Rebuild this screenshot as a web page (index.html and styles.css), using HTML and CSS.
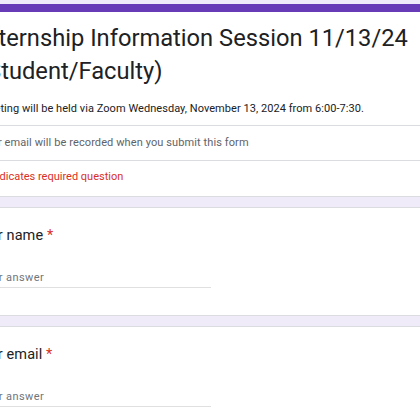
FILE: index.html
```html
<!DOCTYPE html>
<html>
<head>
<meta charset="utf-8">
<link rel="stylesheet" href="styles.css">
</head>
<body>
<div class="page">
  <div class="card header">
    <div class="head-main">
      <div class="title">Internship Information Session 11/13/24 (Student/Faculty)</div>
      <div class="desc">Meeting will be held via Zoom Wednesday, November 13, 2024 from 6:00-7:30.</div>
    </div>
    <div class="row note">Your email will be recorded when you submit this form</div>
    <div class="row required">* Indicates required question</div>
  </div>
  <div class="card question">
    <div class="q-label">Your name <span class="star">*</span></div>
    <div class="answer">Your answer</div>
  </div>
  <div class="card question">
    <div class="q-label">Your email <span class="star">*</span></div>
    <div class="answer">Your answer</div>
  </div>
</div>
</body>
</html>
```

FILE: styles.css
```css
html, body {
  margin: 0;
  padding: 0;
  background: #f0ebf8;
  overflow: hidden;
}
body {
  font-family: Roboto, "Liberation Sans", Arial, sans-serif;
  color: #202124;
}
.page {
  margin-left: -44px;
  width: 500px;
  padding-top: 4px;
  display: flex;
  flex-direction: column;
  gap: 10px;
}
.card {
  background: #fff;
  border: 1px solid #dadce0;
  border-radius: 8px;
}
.header {
  border-top: 8px solid #673ab7;
  border-radius: 8px 8px 0 0;
}
.head-main {
  padding: 10px 24px 7px 22px;
  border-bottom: 1px solid #dadce0;
}
.title {
  max-width: 436px;
  font-size: 23.7px;
  line-height: 33px;
  font-weight: 400;
  color: #202124;
}
.desc {
  margin-top: 12px;
  font-size: 11px;
  line-height: 18px;
  letter-spacing: 0.05px;
  color: #202124;
}
.row {
  padding: 8px 24px 8px 22px;
  font-size: 11px;
  line-height: 18px;
}
.note {
  color: #5f6368;
  letter-spacing: 0.1px;
  border-bottom: 1px solid #dadce0;
}
.required {
  color: #d93025;
  padding-left: 26px;
  padding-top: 7px;
  padding-bottom: 10px;
}
.question {
  padding: 18px 24px 25px 22px;
  height: 64px;
}
.q-label {
  margin-left: -6px;
  font-size: 14.5px;
  line-height: 20px;
  letter-spacing: 0.1px;
  color: #202124;
}
.star {
  color: #d93025;
}
.answer {
  margin-top: 23px;
  width: 232px;
  font-size: 11px;
  line-height: 18px;
  letter-spacing: 0.4px;
  color: #70757a;
  border-bottom: 1px solid #e0e0e0;
}
```
